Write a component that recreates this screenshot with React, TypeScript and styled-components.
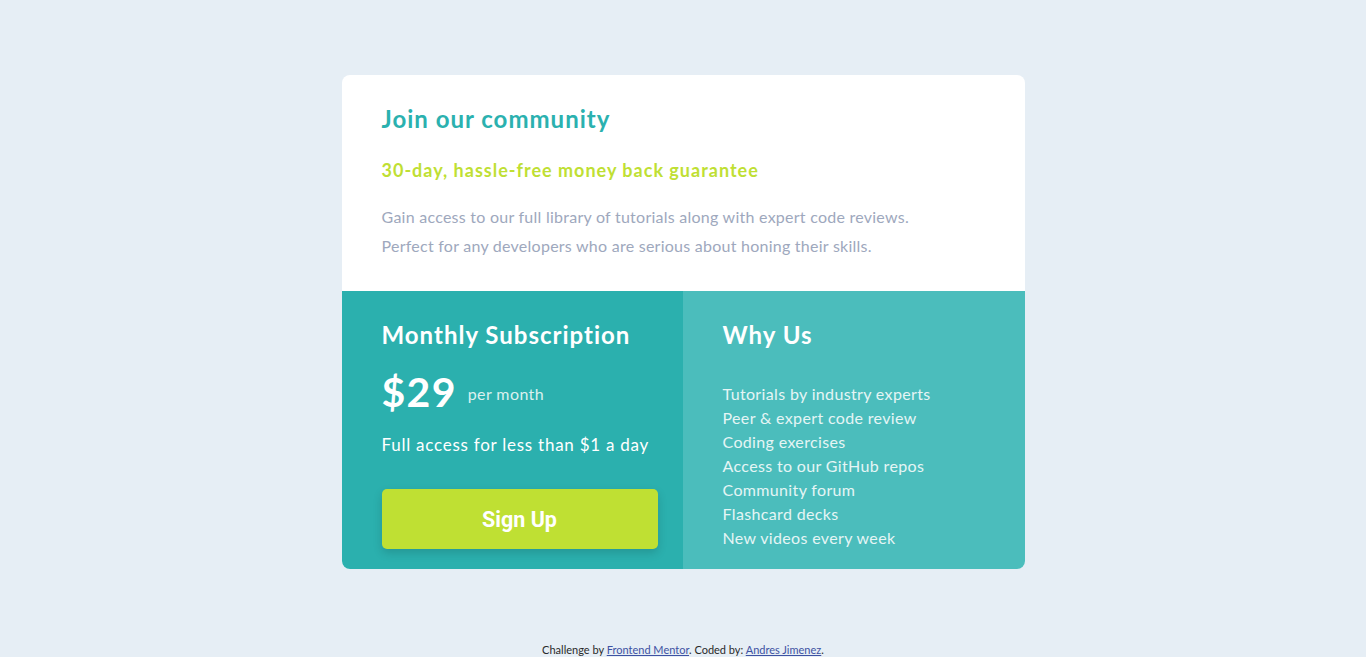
import React from "react";
import styled, { createGlobalStyle } from "styled-components";

const Global = createGlobalStyle`
  * { box-sizing: border-box; }
  html, body { margin: 0; padding: 0; }
  body {
    background: #e6eef5;
    font-family: Lato, "Noto Sans", sans-serif;
  }
`;

const Page = styled.div`
  min-height: 657px;
  display: flex;
  flex-direction: column;
  align-items: center;
`;

const Main = styled.main`
  flex: 1;
  padding-top: 75px;
  display: flex;
  justify-content: center;
  align-items: flex-start;
`;

const Card = styled.section`
  width: 683px;
  border-radius: 8px;
  overflow: hidden;
  background: #fff;
  display: grid;
  grid-template-columns: 341px 342px;
`;

const Top = styled.div`
  grid-column: 1 / span 2;
  padding: 28px 40px 0;
  height: 216px;
`;

const Title = styled.h1`
  margin: 0;
  color: #2bb1af;
  font-size: 24px;
  font-weight: 700;
  line-height: 32px;
  letter-spacing: 1px;
`;

const Guarantee = styled.h2`
  margin: 23px 0 0;
  color: #bfdf34;
  font-size: 18px;
  font-weight: 700;
  line-height: 24px;
  letter-spacing: 1px;
`;

const Para = styled.p`
  margin: 20px 0 0;
  color: #9ea8bd;
  font-size: 16px;
  line-height: 29px;
  letter-spacing: 0.25px;
`;

const Col = styled.div<{ $bg: string }>`
  background: ${(p) => p.$bg};
  padding: 28px 40px 20px;
  height: 278px;
  color: #fff;
`;

const ColTitle = styled.h3`
  margin: 0;
  font-size: 24px;
  font-weight: 700;
  line-height: 32px;
  letter-spacing: 1px;
`;

const PriceRow = styled.div`
  display: flex;
  align-items: center;
  gap: 11px;
  margin-top: 16px;
  height: 48px;
`;

const Price = styled.span`
  font-size: 41px;
  font-weight: 700;
  letter-spacing: 1.3px;
`;

const Per = styled.span`
  font-size: 16px;
  color: #daf0ef;
  padding-top: 4px;
  letter-spacing: 0.4px;
`;

const Access = styled.p`
  margin: 18px 0 0;
  font-size: 17px;
  line-height: 24px;
  letter-spacing: 0.75px;
  white-space: nowrap;
`;

const Button = styled.button`
  margin-top: 32px;
  width: 276px;
  height: 60px;
  border: none;
  border-radius: 5px;
  background: #bfe033;
  color: #fff;
  font-family: Roboto, "Liberation Sans", sans-serif;
  font-size: 21.5px;
  font-weight: 700;
  box-shadow: 0 4px 10px rgba(0, 0, 0, 0.15);
  cursor: pointer;
`;

const List = styled.ul`
  list-style: none;
  margin: 31px 0 0;
  padding: 0;
  color: #e5f5f5;
  font-size: 16px;
  line-height: 24px;
  letter-spacing: 0.35px;
`;

const Footer = styled.footer`
  height: 22px;
  font-size: 11px;
  color: #2a2a2a;
  text-align: center;
  font-family: Lato, sans-serif;
  padding-top: 8px;
  a { color: #3e52a3; }
`;

const features = [
  "Tutorials by industry experts",
  "Peer & expert code review",
  "Coding exercises",
  "Access to our GitHub repos",
  "Community forum",
  "Flashcard decks",
  "New videos every week",
];

export default function App() {
  return (
    <>
      <Global />
      <Page>
        <Main>
          <Card>
            <Top>
              <Title>Join our community</Title>
              <Guarantee>30-day, hassle-free money back guarantee</Guarantee>
              <Para>
                Gain access to our full library of tutorials along with expert code reviews.
                <br />
                Perfect for any developers who are serious about honing their skills.
              </Para>
            </Top>
            <Col $bg="#2bb0ae">
              <ColTitle>Monthly Subscription</ColTitle>
              <PriceRow>
                <Price>$29</Price>
                <Per>per month</Per>
              </PriceRow>
              <Access>Full access for less than $1 a day</Access>
              <Button>Sign Up</Button>
            </Col>
            <Col $bg="#4bbdbc">
              <ColTitle>Why Us</ColTitle>
              <List>
                {features.map((f) => (
                  <li key={f}>{f}</li>
                ))}
              </List>
            </Col>
          </Card>
        </Main>
        <Footer>
          Challenge by <a href="#">Frontend Mentor</a>. Coded by: <a href="#">Andres Jimenez</a>.
        </Footer>
      </Page>
    </>
  );
}
